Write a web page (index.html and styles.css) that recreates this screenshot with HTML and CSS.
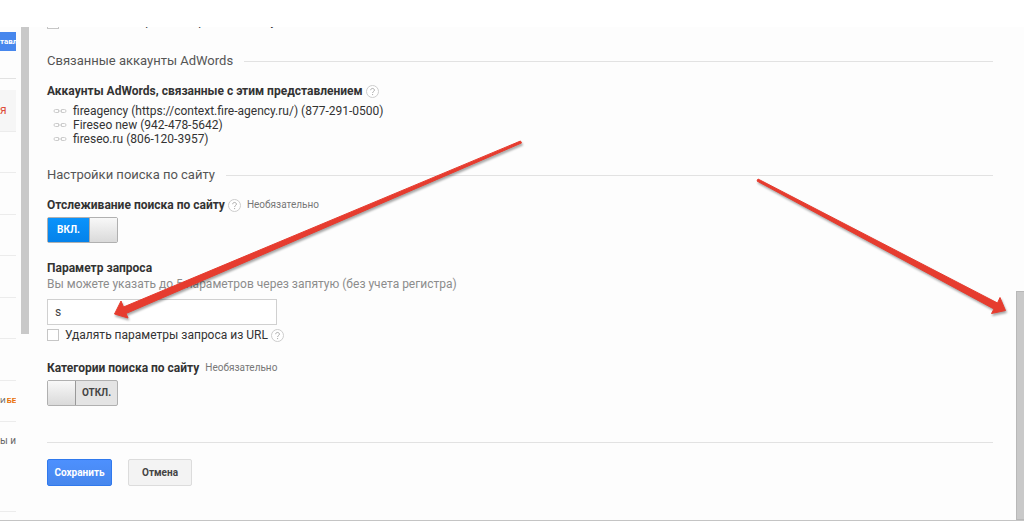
FILE: index.html
```html
<!DOCTYPE html>
<html lang="ru">
    <head>
        <meta charset="UTF-8">
        <title>Настройки представления</title>
        <link rel="stylesheet" href="styles.css">
    </head>
    <body>
        <div id="page">
            <div id="sidebar">
                <button class="create" type="button">тавл</button>
                <ul class="menu">
                    <li class="selected">я</li>
                    <li></li>
                    <li></li>
                    <li></li>
                    <li></li>
                    <li></li>
                    <li></li>
                    <li>И <b>БЕ</b></li>
                </ul>
                <div class="last">ы и</div>
            </div>
            <div class="scroll left"></div>
            <form id="settings">
                <div class="cut">
                    <label class="check"><input type="checkbox"> Исключить обращения роботов и пауков</label>
                </div>

                <h2>Связанные аккаунты AdWords</h2>
                <div class="field">
                    <h3>Аккаунты AdWords, связанные с этим представлением
                        <svg class="help" viewBox="0 0 13 13"><circle cx="6.5" cy="6.5" r="6"/><path d="M4.7 5.2c0-2.4 3.7-2.3 3.7 0 0 1.3-1.8 1.4-1.8 2.8M6.6 9v1.1"/></svg>
                    </h3>
                    <ul class="accounts">
                        <li><svg class="chain" viewBox="0 0 14 6"><path d="M5.5 1.5H2.5a1.5 1.5 0 0 0 0 3h3zM8.5 1.5h3a1.5 1.5 0 0 1 0 3h-3zM5.500 3h3"/></svg>fireagency (https://context.fire-agency.ru/) (877-291-0500)</li>
                        <li><svg class="chain" viewBox="0 0 14 6"><path d="M5.5 1.5H2.5a1.5 1.5 0 0 0 0 3h3zM8.5 1.5h3a1.5 1.5 0 0 1 0 3h-3zM5.500 3h3"/></svg>Fireseo new (942-478-5642)</li>
                        <li><svg class="chain" viewBox="0 0 14 6"><path d="M5.5 1.5H2.5a1.5 1.5 0 0 0 0 3h3zM8.5 1.5h3a1.5 1.5 0 0 1 0 3h-3zM5.500 3h3"/></svg>fireseo.ru (806-120-3957)</li>
                    </ul>
                </div>

                <h2>Настройки поиска по сайту</h2>
                <div class="field">
                    <h3>Отслеживание поиска по сайту
                        <svg class="help" viewBox="0 0 13 13"><circle cx="6.5" cy="6.5" r="6"/><path d="M4.7 5.2c0-2.4 3.7-2.3 3.7 0 0 1.3-1.8 1.4-1.8 2.8M6.6 9v1.1"/></svg>
                        <small>Необязательно</small>
                    </h3>
                    <label class="toggle on">
                        <input type="checkbox" aria-label="Отслеживание поиска по сайту" checked>
                        <span class="state">ВКЛ.</span><span class="knob"></span>
                    </label>
                </div>
                <div class="field">
                    <h3><label for="param">Параметр запроса</label></h3>
                    <p>Вы можете указать до 5 параметров через запятую (без учета регистра)</p>
                    <input id="param" type="text" value="s">
                    <div class="line">
                        <label class="check"><input type="checkbox"> Удалять параметры запроса из URL</label>
                        <svg class="help" viewBox="0 0 13 13"><circle cx="6.5" cy="6.5" r="6"/><path d="M4.7 5.2c0-2.4 3.7-2.3 3.7 0 0 1.3-1.8 1.4-1.8 2.8M6.6 9v1.1"/></svg>
                    </div>
                </div>
                <div class="field">
                    <h3>Категории поиска по сайту <small>Необязательно</small></h3>
                    <label class="toggle">
                        <input type="checkbox" aria-label="Категории поиска по сайту">
                        <span class="knob"></span><span class="state">ОТКЛ.</span>
                    </label>
                </div>

                <div class="buttons">
                    <button class="save" type="button">Сохранить</button>
                    <button class="cancel" type="button">Отмена</button>
                </div>
            </form>
            <div class="scroll right"></div>
        </div>

        <svg class="arrow first" viewBox="0 0 412 184"><path d="M409.500 4L410.500 6L15 176.500L17 181L3.500 177L10 164L12.500 170z"/></svg>
        <svg class="arrow second" viewBox="0 0 256 142"><path d="M4 2L3 4L240 132L237.500 136.500L251.500 133.500L246 120.500L243.500 126z"/></svg>
    </body>
</html>
```
FILE: styles.css
```css
*{
    margin:0;
    padding:0;
    box-sizing:border-box;
}
ul{
    list-style:none;
}
body{
    position:relative;
    padding-top:27px;
    background:#fff;
    color:#333;
    font:12px/16px Roboto, "Liberation Sans", sans-serif;
}
button, input{
    font-family:inherit;
}
#page{
    display:flex;
    background:#fdfdfd;
    border-bottom:1px solid #c4c4c4;
}

/* left menu, cut by the window */
#sidebar{
    width:16px;
    margin-right:5px;
    overflow:hidden;
    white-space:nowrap;
}
.create{
    display:flex;
    align-items:center;
    width:16px;
    height:19px;
    margin-top:5px;
    border:none;
    background:#4787ed;
    color:#fff;
    font-size:8px;
    font-weight:bold;
}
.menu{
    display:grid;
    grid-auto-rows:1fr;
    height:332px;
    margin-top:39px;
    box-shadow:0 -11px #fdfdfd, 0 -12px #e2e2e2;
}
.menu li{
    display:flex;
    align-items:center;
    gap:1px;
    border-bottom:1px solid #ececec;
    color:#666;
    font-size:8px;
}
.menu .selected{
    background:#f6f6f6;
    color:#dd4b39;
    font-size:12px;
}
.menu b{
    color:#e8710a;
    font-size:8px;
}
.last{
    height:90px;
    padding-top:11px;
    border-bottom:1px solid #ececec;
    color:#666;
    font-size:10px;
}

.scroll{
    flex:none;
    width:8px;
    background:#c9c9c9;
}
.left{
    height:307px;
}
.right{
    align-self:flex-end;
    height:229px;
    border:1px solid #b8b8b8;
    border-right:none;
}

#settings{
    flex:1;
    padding:0 23px 34px 18px;
}
.cut{
    display:flex;
    align-items:flex-end;
    height:2px;
    overflow:hidden;
}
.cut .check{
    align-items:flex-end;
}
h2{
    display:flex;
    align-items:center;
    gap:11px;
    margin-top:23px;
    color:#555;
    font-size:13px;
    line-height:18px;
    font-weight:normal;
}
.field + h2{
    margin-top:20px;
}
h2:after{
    content:"";
    flex:1;
    border-top:1px solid #e2e2e2;
}
.field{
    margin-top:17px;
}
h2 + .field{
    margin-top:13px;
}
h3{
    display:flex;
    align-items:center;
    font-size:12px;
    font-weight:bold;
}
h3 small{
    margin-left:6px;
    color:#777;
    font-size:10px;
    font-weight:normal;
}
.help{
    flex:none;
    width:13px;
    height:13px;
    margin-left:3px;
    fill:none;
    stroke:#aaa;
}
.help circle{
    fill:#fff;
    stroke:#ccc;
}
.accounts{
    margin-top:5px;
    line-height:14px;
}
.accounts li{
    display:flex;
    align-items:center;
    padding-left:6px;
}
.chain{
    width:14px;
    height:6px;
    margin-right:6px;
    fill:none;
    stroke:#ccc;
}
p{
    color:#8c8c8c;
}

.toggle{
    position:relative;
    display:flex;
    width:71px;
    height:26px;
    margin-top:4px;
    border:1px solid #b0b0b0;
    border-radius:2px;
    background:#e4e4e4;
    color:#444;
    font-size:10px;
    font-weight:bold;
}
.toggle input{
    position:absolute;
    opacity:0;
}
.state{
    flex:1;
    display:flex;
    align-items:center;
    justify-content:center;
}
.knob{
    width:28px;
    border-right:1px solid #999;
    background:linear-gradient(#f8f8f8, #dadada);
}
.on .state{
    background:linear-gradient(#0a93fb, #0582ea);
    color:#fff;
}
.on .knob{
    border-right:none;
    border-left:1px solid #aaa;
}

#param{
    display:block;
    width:230px;
    height:26px;
    margin-top:7px;
    padding:0 7px;
    border:1px solid #d0d0d0;
    background:#fff;
    color:#444;
    font-size:12px;
}
.line{
    display:flex;
    align-items:center;
    margin-top:2px;
}
.check{
    display:flex;
    align-items:center;
    gap:6px;
}
.check input{
    appearance:none;
    width:12px;
    height:12px;
    border:1px solid #c6c6c6;
    background:#fff;
}

.buttons{
    display:flex;
    gap:16px;
    margin-top:36px;
    padding-top:16px;
    border-top:1px solid #e2e2e2;
}
.buttons button{
    height:27px;
    border:1px solid #dcdcdc;
    border-radius:2px;
    background:#f3f3f3;
    color:#444;
    font-size:10px;
    font-weight:bold;
}
.buttons .save{
    width:65px;
    border-color:#3079ed;
    background:linear-gradient(#4d90fe, #4787ed);
    color:#fff;
}
.buttons .cancel{
    width:64px;
}

/* pointers over the page */
.arrow{
    position:absolute;
    fill:#e63c2f;
    stroke:#e63c2f;
    stroke-linejoin:round;
    filter:drop-shadow(1px 2px 1px rgba(0,0,0,.35));
    overflow:visible;
    pointer-events:none;
}
.first{
    left:111px;
    top:137px;
    width:412px;
    height:184px;
}
.second{
    left:754px;
    top:177px;
    width:256px;
    height:142px;
}
```
